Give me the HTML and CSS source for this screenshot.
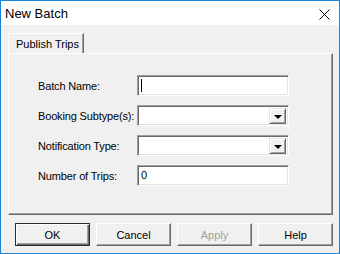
FILE: index.html
```html
<!DOCTYPE html>
<html lang="en">
<head>
  <meta charset="UTF-8" />
  <title>New Batch</title>
  <link rel="stylesheet" href="styles.css">
</head>
<body>
  <div class="window">
    <div class="titlebar">
      <span class="title">New Batch</span>
      <svg class="close" width="11" height="11" viewBox="0 0 11 11">
        <path d="M0.5 0.5 L10.5 10.5 M10.5 0.5 L0.5 10.5" stroke="#000" stroke-width="1" fill="none" />
      </svg>
    </div>

    <div class="content">
      <div class="tabs">
        <div class="tab">Publish Trips</div>
      </div>
      <div class="panel">
        <div class="form">
          <label>Batch Name:</label>
          <div class="field"><span class="caret"></span></div>

          <label>Booking Subtype(s):</label>
          <div class="field combo"><span class="drop"><i></i></span></div>

          <label>Notification Type:</label>
          <div class="field combo"><span class="drop"><i></i></span></div>

          <label>Number of Trips:</label>
          <div class="field">0</div>
        </div>
      </div>

      <div class="buttons">
        <button class="btn default">OK</button>
        <button class="btn">Cancel</button>
        <button class="btn disabled">Apply</button>
        <button class="btn">Help</button>
      </div>
    </div>
  </div>
</body>
</html>
```

FILE: styles.css
```css
* {
  box-sizing: border-box;
}
body {
  margin: 0;
  font-family: 'Liberation Sans', Arial, sans-serif;
  font-size: 11px;
  color: #000;
  background: #fff;
}
.window {
  width: 340px;
  height: 254px;
  border: 1px solid #1883d7;
  background: #f0f0f0;
}
.titlebar {
  height: 24px;
  background: #fff;
  display: flex;
  align-items: center;
  justify-content: space-between;
  padding: 0 9px 0 4px;
}
.title {
  font-size: 13px;
  margin-top: 1px;
}
.close {
  display: block;
  margin-top: 3px;
}
.content {
  padding: 8px 6px 0 7px;
}
.tabs {
  display: flex;
  height: 20px;
}
.tab {
  width: 76px;
  height: 20px;
  padding: 4px 0 0 7px;
  border-top: 1px solid #fff;
  border-left: 1px solid #fff;
  border-right: 1px solid #696969;
  box-shadow: inset -1px 0 0 #a0a0a0;
}
.panel {
  height: 162px;
  width: 325px;
  border-top: 1px solid #fff;
  border-left: 1px solid #fff;
  border-right: 1px solid #696969;
  border-bottom: 1px solid #696969;
  box-shadow: inset -1px -1px 0 #a0a0a0;
  padding: 21px 0 0 29px;
}
.form {
  display: grid;
  grid-template-columns: 99px 152px;
  grid-auto-rows: 21px;
  row-gap: 9px;
  align-items: center;
}
.form label {
  padding-top: 1px;
  white-space: nowrap;
  letter-spacing: -0.15px;
}
.field {
  height: 21px;
  background: #fff;
  border-top: 1px solid #a0a0a0;
  border-left: 1px solid #a0a0a0;
  border-right: 1px solid #fff;
  border-bottom: 1px solid #fff;
  box-shadow: inset 1px 1px 0 #696969, inset -1px -1px 0 #e3e3e3;
  padding: 3px 0 0 3px;
  position: relative;
}
.caret {
  display: block;
  width: 1px;
  height: 13px;
  background: #000;
  margin-left: 0;
}
.combo {
  padding: 0;
}
.drop {
  position: absolute;
  top: 2px;
  right: 2px;
  width: 17px;
  height: 16px;
  background: #f0f0f0;
  border-top: 1px solid #e3e3e3;
  border-left: 1px solid #e3e3e3;
  border-right: 1px solid #696969;
  border-bottom: 1px solid #696969;
  box-shadow: inset 1px 1px 0 #fff, inset -1px -1px 0 #a0a0a0;
  display: flex;
  align-items: center;
  justify-content: center;
}
.drop i {
  display: block;
  width: 0;
  height: 0;
  border-left: 4px solid transparent;
  border-right: 4px solid transparent;
  border-top: 4px solid #000;
  margin-top: 1px;
}
.buttons {
  display: flex;
  gap: 6px;
  margin-top: 8px;
  padding-left: 7px;
}
.btn {
  width: 75px;
  height: 23px;
  font-family: 'Liberation Sans', Arial, sans-serif;
  font-size: 11px;
  color: #000;
  background: #f0f0f0;
  border-top: 1px solid #fff;
  border-left: 1px solid #fff;
  border-right: 1px solid #696969;
  border-bottom: 1px solid #696969;
  box-shadow: inset -1px -1px 0 #a0a0a0;
  padding: 0;
}
.btn.default {
  border: 1px solid #2b2b2b;
  box-shadow: inset 1px 1px 0 #fff, inset -1px -1px 0 #696969, inset -2px -2px 0 #a0a0a0;
}
.btn.disabled {
  color: #a0a0a0;
}
```
